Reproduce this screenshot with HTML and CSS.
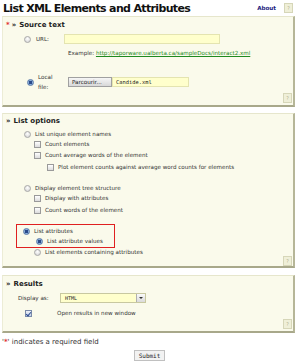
FILE: index.html
```html
<!DOCTYPE html>
<html>
<head>
<meta charset="utf-8">
<link rel="stylesheet" href="styles.css">
</head>
<body>
<div class="top">
  <h1 class="title">List XML Elements and Attributes</h1>
  <a class="about">About</a>
  <span class="help">?</span>
</div>

<section class="panel p1">
  <div class="ph"><span class="req">*</span><span class="raq">»</span>Source text</div>
  <div class="row url-row"><span class="radio"></span><span class="lbl">URL:</span><span class="field url-field"></span></div>
  <div class="example">Example: <a class="link">http://taporware.ualberta.ca/sampleDocs/interact2.xml</a></div>
  <div class="row local-row"><span class="radio on"></span><span class="lbl two">Local<br>file:</span><span class="btn">Parcourir...</span><span class="field file-field">Candide.xml</span></div>
  <div class="hrow"><span class="help">?</span></div>
</section>

<section class="panel p2">
  <div class="ph"><span class="raq">»</span>List options</div>
  <div class="row l1 r1"><span class="radio"></span>List unique element names</div>
  <div class="row l2 r2"><span class="check"></span>Count elements</div>
  <div class="row l2 r3"><span class="check"></span>Count average words of the element</div>
  <div class="row l3 r4"><span class="check"></span>Plot element counts against average word counts for elements</div>
  <div class="row l1 r5"><span class="radio"></span>Display element tree structure</div>
  <div class="row l2 r6"><span class="check"></span>Display with attributes</div>
  <div class="row l2 r7"><span class="check"></span>Count words of the element</div>
  <div class="mark">
    <div class="row l1m r8"><span class="radio on"></span>List attributes</div>
    <div class="row l2m r9"><span class="radio on"></span>List attribute values</div>
  </div>
  <div class="row l2 r10"><span class="radio"></span>List elements containing attributes</div>
  <div class="hrow"><span class="help">?</span></div>
</section>

<section class="panel p3">
  <div class="ph"><span class="raq">»</span>Results</div>
  <div class="row disp-row"><span class="lbl disp">Display as:</span><span class="select"><span class="sv">HTML</span><span class="arrow"></span></span></div>
  <div class="row open-row"><span class="check ok"></span><span class="open">Open results in new window</span></div>
  <div class="hrow"><span class="help">?</span></div>
</section>

<p class="note">'<span class="req">*</span>' indicates a required field</p>
<div class="submit-wrap"><span class="submit">Submit</span></div>
</body>
</html>
```

FILE: styles.css
```css
* { box-sizing: border-box; }
body {
  margin: 0;
  width: 300px;
  height: 363px;
  background: #fff;
  font-family: "DejaVu Sans", Verdana, sans-serif;
  font-size: 5.6px;
  color: #333;
  overflow: hidden;
}
.top {
  display: flex;
  align-items: center;
  height: 16px;
  padding: 0 7px 0 3px;
}
.title {
  margin: 0;
  font-size: 11px;
  font-weight: bold;
  color: #111;
  flex: 1;
  letter-spacing: -0.65px;
  white-space: nowrap;
}
.about {
  font-weight: bold;
  color: #1a237e;
  font-size: 5.6px;
  margin-right: 8px;
}
.help {
  display: inline-flex;
  align-items: center;
  justify-content: center;
  width: 9px;
  height: 10px;
  background: #efefd8;
  border: 1px solid #d6d6b8;
  color: #b0b090;
  font-size: 5px;
}
.panel {
  margin-left: 2px;
  width: 293px;
  background: #fafaeb;
  border-top: 1px solid #e6e6cc;
  border-left: 1px solid #ececd6;
  border-right: 2px solid #b6b698;
  border-bottom: 2px solid #a8a88a;
}
.ph {
  height: 16px;
  display: flex;
  align-items: center;
  padding-left: 3px;
  font-weight: bold;
  font-size: 7px;
  color: #222;
}
.req { color: #e03030; font-weight: bold; }
.ph .req { margin-right: 2px; }
.raq { margin-right: 3px; }
.row {
  display: flex;
  align-items: center;
  height: 10px;
  white-space: nowrap;
}
.radio {
  display: inline-block;
  width: 7px;
  height: 7px;
  border-radius: 50%;
  border: 1px solid #a8a8a8;
  background: radial-gradient(circle at 50% 35%, #ffffff, #d0d0d0);
  margin-right: 4px;
  flex: none;
}
.radio.on {
  border-color: #5a7aa8;
  background: radial-gradient(circle, #2a4a8a 0 1.5px, #8cb0dc 2px, #5c86c0 100%);
}
.check {
  display: inline-block;
  width: 7px;
  height: 7px;
  border: 1px solid #9a9a9a;
  background: linear-gradient(#ffffff, #dcdcdc);
  margin-right: 4px;
  flex: none;
}
.check.ok {
  border-color: #7a8aa8;
  background: linear-gradient(#eef2fa, #c4d0e6);
  position: relative;
}
.check.ok::after {
  content: "";
  position: absolute;
  left: 1px;
  top: 0px;
  width: 2px;
  height: 4px;
  border: solid #2a4a90;
  border-width: 0 1px 1px 0;
  transform: rotate(40deg);
}
.lbl { color: #333; }
.field {
  display: inline-block;
  height: 10px;
  background: #ffffcc;
  border: 1px solid #e4e4b0;
}
.url-row { margin-top: 1px; padding-left: 21px; }
.url-row .radio { margin-right: 5px; }
.url-field { width: 156px; margin-left: 15px; }
.example {
  margin-top: 4px;
  height: 10px;
  line-height: 10px;
  padding-left: 65px;
  color: #333;
}
.link { color: #1f8a1f; text-decoration: underline; }
.local-row { margin-top: 14px; height: 20px; padding-left: 24px; }
.lbl.two { line-height: 10px; margin-left: 0; width: 30px; }
.btn {
  display: inline-flex;
  align-items: center;
  height: 10px;
  padding: 0 3px;
  border: 1px solid #a0a0a0;
  background: linear-gradient(#f6f6f6, #d8d8d8);
  color: #222;
  width: 44px;
}
.file-field {
  width: 77px;
  font-family: "DejaVu Sans Mono", monospace;
  font-size: 5.4px;
  line-height: 8px;
  padding-left: 3px;
  color: #222;
}
.hrow {
  display: flex;
  justify-content: flex-end;
  padding-right: 1px;
  margin-top: 1px;
  padding-bottom: 2px;
}
.p1 { margin-top: 0; }
.p2 { margin-top: 6px; }
.p3 { margin-top: 7px; }
.p2 .ph { height: 14px; }
.l1 { padding-left: 21px; }
.l2 { padding-left: 31px; }
.l3 { padding-left: 44px; }
.r1 { margin-top: 1px; }
.r3 { margin-top: 1px; }
.r4 { margin-top: 2px; }
.r5 { margin-top: 11px; }
.r7 { margin-top: 2px; }
.mark {
  margin: 9px 0 0 13px;
  width: 99px;
  height: 24px;
  border: 1.5px solid #e02020;
  padding-top: 1px;
}
.l1m { padding-left: 6px; }
.l2m { padding-left: 19px; }
.r10 { margin-top: -1px; }
.p2 .hrow { margin-top: -1px; padding-bottom: 0; }
.disp-row { padding-left: 15px; height: 12px; }
.disp { width: 42px; }
.select {
  display: inline-flex;
  align-items: center;
  justify-content: space-between;
  width: 86px;
  height: 10px;
  background: #ffffcc;
  border: 1px solid #c8c8a0;
  padding-left: 4px;
  font-family: "DejaVu Sans Mono", monospace;
  font-size: 5px;
  color: #222;
}
.arrow {
  width: 9px;
  height: 8px;
  background: linear-gradient(#fafafa, #dadada);
  border-left: 1px solid #b0b0b0;
  position: relative;
}
.arrow::after {
  content: "";
  position: absolute;
  left: 2px;
  top: 3px;
  border: 2px solid transparent;
  border-top: 2px solid #333;
}
.open-row { margin-top: 4px; padding-left: 22px; }
.open { margin-left: 21px; }
.note {
  margin: 4px 0 0 2px;
  height: 10px;
  line-height: 10px;
  font-size: 7px;
  color: #333;
}
.submit-wrap {
  display: flex;
  justify-content: center;
  margin-top: 3px;
  padding-right: 1px;
}
.submit {
  display: inline-flex;
  align-items: center;
  height: 11px;
  padding: 0 4px;
  border: 1px solid #c0c0c0;
  background: #f2f2f2;
  font-family: "DejaVu Sans Mono", monospace;
  font-size: 6px;
  color: #222;
}
```
